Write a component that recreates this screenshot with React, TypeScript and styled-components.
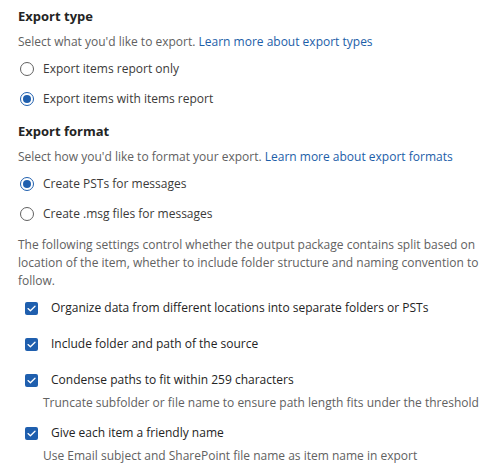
import styled, { createGlobalStyle } from 'styled-components'

const GlobalStyle = createGlobalStyle`
  html, body {
    margin: 0;
    padding: 0;
    background: #ffffff;
  }
  body {
    font-family: 'Open Sans', 'Noto Sans', sans-serif;
    font-size: 12px;
    color: #323130;
  }
`

const BLUE = '#1f5fae'

interface RadioProps {
  checked?: boolean
  label: string
}

const Radio = ({ checked, label }: RadioProps) => (
  <RadioRow>
    <RadioCircle $checked={checked} />
    <Label>{label}</Label>
  </RadioRow>
)

interface CheckProps {
  label: string
  hint?: string
}

const Check = ({ label, hint }: CheckProps) => (
  <CheckItem $hint={!!hint}>
    <CheckRow>
      <CheckBox>
        <svg width="9" height="7" viewBox="0 0 9 7" fill="none">
          <path d="M1 3.6 L3.4 5.8 L8 1.2" stroke="#ffffff" strokeWidth="1.3" strokeLinecap="round" strokeLinejoin="round" />
        </svg>
      </CheckBox>
      <CheckLabel>{label}</CheckLabel>
    </CheckRow>
    {hint && <Hint>{hint}</Hint>}
  </CheckItem>
)

const App = () => {
  return (
    <Page>
      <GlobalStyle />
      <Section>
        <Heading>Export type</Heading>
        <Description>
          Select what you'd like to export. <Link>Learn more about export types</Link>
        </Description>
        <RadioGroup>
          <Radio label="Export items report only" />
          <Radio checked label="Export items with items report" />
        </RadioGroup>
      </Section>
      <Section>
        <Heading>Export format</Heading>
        <Description>
          Select how you'd like to format your export. <Link>Learn more about export formats</Link>
        </Description>
        <RadioGroup>
          <Radio checked label="Create PSTs for messages" />
          <Radio label="Create .msg files for messages" />
        </RadioGroup>
      </Section>
      <Paragraph>
        The following settings control whether the output package contains split based on
        location of the item, whether to include folder structure and naming convention to
        follow.
      </Paragraph>
      <CheckList>
        <Check label="Organize data from different locations into separate folders or PSTs" />
        <Check label="Include folder and path of the source" />
        <Check
          label="Condense paths to fit within 259 characters"
          hint="Truncate subfolder or file name to ensure path length fits under the threshold"
        />
        <Check
          label="Give each item a friendly name"
          hint="Use Email subject and SharePoint file name as item name in export"
        />
      </CheckList>
    </Page>
  )
}

export default App

const Page = styled.div`
  width: 500px;
  height: 469px;
  box-sizing: border-box;
  padding: 6px 0 0 18px;
  overflow: hidden;
`

const Section = styled.section`
  display: flex;
  flex-direction: column;
  margin-bottom: 12px;
`

const Heading = styled.h2`
  margin: 0;
  font-size: 13px;
  font-weight: 700;
  line-height: 20px;
  color: #242424;
`

const Description = styled.p`
  margin: 6px 0 0;
  line-height: 20px;
  color: #616161;
`

const Link = styled.a`
  color: #1c5ea8;
  cursor: pointer;
`

const RadioGroup = styled.div`
  display: flex;
  flex-direction: column;
  gap: 10px;
  margin-top: 7px;
`

const RadioRow = styled.label`
  display: flex;
  align-items: center;
  gap: 9px;
  height: 20px;
  padding-left: 2px;
`

const RadioCircle = styled.span<{ $checked?: boolean }>`
  box-sizing: border-box;
  width: 14px;
  height: 14px;
  border-radius: 50%;
  border: 1px solid ${(p) => (p.$checked ? BLUE : '#616161')};
  display: flex;
  align-items: center;
  justify-content: center;
  flex-shrink: 0;

  &::after {
    content: '';
    display: ${(p) => (p.$checked ? 'block' : 'none')};
    width: 8px;
    height: 8px;
    border-radius: 50%;
    background: ${BLUE};
  }
`

const Label = styled.span`
  line-height: 20px;
  color: #3b3a39;
`

const Paragraph = styled.p`
  margin: 10px 0 0;
  width: 470px;
  line-height: 18px;
  color: #616161;
`

const CheckList = styled.div`
  display: flex;
  flex-direction: column;
  margin-top: 0;
  padding-left: 7px;
`

const CheckItem = styled.div<{ $hint?: boolean }>`
  display: flex;
  flex-direction: column;
  padding: 8px 0;
  margin-bottom: ${(p) => (p.$hint ? '-6px' : '0')};
`

const CheckRow = styled.label`
  display: flex;
  align-items: center;
  gap: 13px;
  height: 20px;
`

const CheckBox = styled.span`
  width: 13px;
  height: 13px;
  border-radius: 2px;
  background: ${BLUE};
  display: flex;
  align-items: center;
  justify-content: center;
  flex-shrink: 0;
`

const CheckLabel = styled.span`
  line-height: 20px;
  color: #242424;
`

const Hint = styled.span`
  margin-top: 3px;
  margin-left: 18px;
  line-height: 20px;
  color: #616161;
`
